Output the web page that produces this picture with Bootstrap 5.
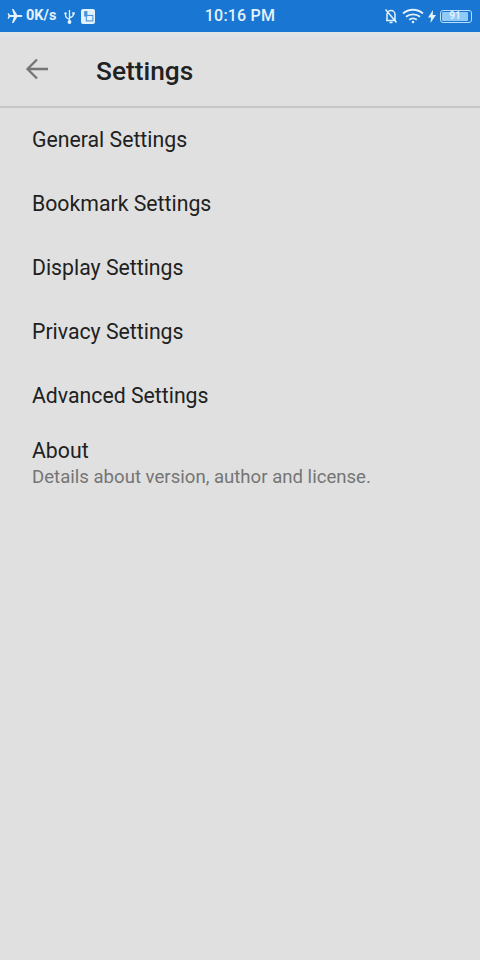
<!DOCTYPE html>
<html lang="en">
<head>
<meta charset="utf-8">
<title>Settings</title>
<link rel="stylesheet" href="https://cdn.jsdelivr.net/npm/bootstrap@5.3.0/dist/css/bootstrap.min.css">
<style>
html,body{height:100%}
body{background:#e0e0e0;font-family:Roboto,"Liberation Sans",sans-serif;overflow:hidden}
.shell{height:960px;width:480px}
.statusbar{height:32px;background:#1976d2;color:#e3f2fd;font-weight:700;position:relative}
.sb-left{padding-left:7px;font-size:14.500px;gap:3px}
.usbicon{margin-left:5px}
.sb-right{padding-right:8px;gap:4px}
.sb-time{position:absolute;left:0;right:0;top:0;height:32px;font-size:16px;font-weight:500;letter-spacing:.2px}
.sim{width:14px;height:15px;background:#e3f2fd;border-radius:2px;margin-left:3px}
.batt{width:32px;height:13px;border:1px solid #bbdefb;border-radius:3px;font-size:10px;line-height:1;padding:1px}
.batt-fill{background:#90caf9;color:#e3f2fd;border-radius:1px;width:26px;height:100%}
.appbar{height:76px;border-bottom:2px solid #c6c6c6;background:linear-gradient(#dfe6e4 0,#e0dfe4 6px,#e0e0e0 14px)}
.back{width:24px;height:24px;margin-left:25px;margin-top:0}
.apptitle{font-size:26.300px;font-weight:500;color:#212121;margin:0 0 0 47px;line-height:1;position:relative;top:2px}
.setrow{height:64px;padding-left:32px;font-size:21.250px;color:#212121;background:transparent;border:0;line-height:1}
.aboutrow{height:64px;padding-left:32px;background:transparent;border:0;line-height:1;padding-top:12px}
.aboutrow .t1{font-size:21.250px;color:#212121}
.aboutrow .t2{font-size:18.600px;color:#757575;margin-top:7px}
</style>
</head>
<body>
<div class="shell d-flex flex-column">
  <div class="statusbar d-flex align-items-center justify-content-between">
    <div class="sb-left d-flex align-items-center">
      <svg width="16" height="16" viewBox="0 0 24 24" fill="#e3f2fd"><path d="M23 12c0-1-.8-1.600-1.700-1.600H15.500L9.700 1.500H7.400l2.800 8.900H4.400L2.700 8H.9l1.200 4-1.200 4h1.800l1.700-2.400h5.800l-2.800 8.900h2.300l5.800-8.900h5.800c.9 0 1.700-.6 1.700-1.600z"/></svg>
      <span>0K/s</span>
      <svg class="usbicon" width="11" height="15" viewBox="0 0 11 15" fill="none" stroke="#e3f2fd" stroke-width="1.300"><path d="M5.500 1v13M5.500 10C2 9.500 1.500 8 1.500 5.500M5.500 8.500c3.500-.5 4-1.500 4-3.500"/><circle cx="5.500" cy="13" r="1.300" fill="#e3f2fd"/><rect x="8.300" y="3.200" width="2.400" height="2.400" fill="#e3f2fd" stroke="none"/><circle cx="1.500" cy="4.500" r="1.200" fill="#e3f2fd" stroke="none"/></svg>
      <div class="sim d-flex align-items-center justify-content-center">
        <svg width="11" height="12" viewBox="0 0 10 11" fill="#1976d2" opacity=".75"><rect x="1" y="1" width="3" height="5"/><rect x="3" y="5" width="6" height="5" fill="none" stroke="#1976d2"/></svg>
      </div>
    </div>
    <div class="sb-time d-flex align-items-center justify-content-center">10:16 PM</div>
    <div class="sb-right d-flex align-items-center">
      <svg width="14" height="16" viewBox="0 0 14 16" fill="none" stroke="#e3f2fd" stroke-width="1.500"><path d="M2 12.500h10M3 12V6.500a4 4 0 0 1 8 0V12M5.500 14.500h3M1.500 1.500l11 13"/></svg>
      <svg width="22" height="16" viewBox="0 0 22 16" fill="none" stroke="#e3f2fd" stroke-width="1.800"><path d="M1 5.500c5.500-5 14.500-5 20 0M4 8.800c3.800-3.300 10.200-3.300 14 0M7.200 11.800c2.200-1.700 5.400-1.700 7.600 0"/><circle cx="11" cy="14" r="1.300" fill="#e3f2fd" stroke="none"/></svg>
      <svg width="8" height="13" viewBox="0 0 8 13" fill="#e3f2fd"><path d="M5 0 0 7.500h3L2.500 13 8 5H4.800z"/></svg>
      <div class="batt"><div class="batt-fill d-flex align-items-center justify-content-center">91</div></div>
    </div>
  </div>
  <div class="appbar d-flex align-items-center">
    <svg class="back" viewBox="0 0 24 24" fill="none" stroke="#757575" stroke-width="2.300"><path d="M23 12H2.500M12 2.500 2.500 12l9.500 9.500"/></svg>
    <h1 class="apptitle">Settings</h1>
  </div>
  <div class="list-group list-group-flush">
    <div class="list-group-item setrow d-flex align-items-center">General Settings</div>
    <div class="list-group-item setrow d-flex align-items-center">Bookmark Settings</div>
    <div class="list-group-item setrow d-flex align-items-center">Display Settings</div>
    <div class="list-group-item setrow d-flex align-items-center">Privacy Settings</div>
    <div class="list-group-item setrow d-flex align-items-center">Advanced Settings</div>
    <div class="list-group-item aboutrow d-flex flex-column">
      <div class="t1">About</div>
      <div class="t2">Details about version, author and license.</div>
    </div>
  </div>
</div>
<script src="https://cdn.jsdelivr.net/npm/bootstrap@5.3.0/dist/js/bootstrap.bundle.min.js"></script>
</body>
</html>
